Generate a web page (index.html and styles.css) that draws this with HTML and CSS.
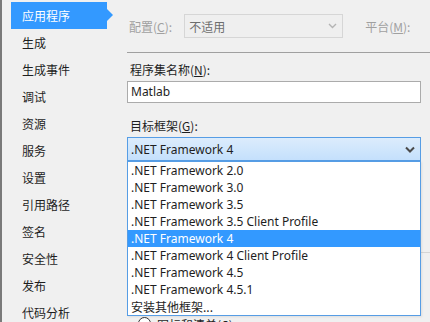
FILE: index.html
```html
<!DOCTYPE html>
<html>
<head lang="zh-CN">
    <meta charset="UTF-8">
    <title>Matlab - 属性</title>
    <link rel="stylesheet" href="styles.css">
</head>
<body>
<div class="page">
    <ul class="side-nav">
        <li class="active">应用程序</li>
        <li>生成</li>
        <li>生成事件</li>
        <li>调试</li>
        <li>资源</li>
        <li>服务</li>
        <li>设置</li>
        <li>引用路径</li>
        <li>签名</li>
        <li>安全性</li>
        <li>发布</li>
        <li>代码分析</li>
    </ul>
    <div class="main">
        <div class="cfg-bar">
            <span class="cfg-label">配置(<u>C</u>):</span>
            <div class="cfg-select">
                <span>不适用</span>
                <svg width="9" height="6" viewBox="0 0 9 6"><polyline points="1,1 4.5,4.5 8,1" fill="none" stroke="#b4b4b4" stroke-width="1.4"/></svg>
            </div>
            <span class="cfg-label">平台(<u>M</u>):</span>
        </div>
        <div class="form">
            <div class="field-label">程序集名称(<u>N</u>):</div>
            <div class="textbox">Matlab</div>
            <div class="field-label second">目标框架(<u>G</u>):</div>
            <div class="combo-wrap">
                <div class="combo">
                    <span>.NET Framework 4</span>
                    <svg width="10" height="7" viewBox="0 0 10 7"><polyline points="1,1.5 5,5.5 9,1.5" fill="none" stroke="#4a4a4a" stroke-width="2"/></svg>
                </div>
                <ul class="combo-list">
                    <li>.NET Framework 2.0</li>
                    <li>.NET Framework 3.0</li>
                    <li>.NET Framework 3.5</li>
                    <li>.NET Framework 3.5 Client Profile</li>
                    <li class="selected">.NET Framework 4</li>
                    <li>.NET Framework 4 Client Profile</li>
                    <li>.NET Framework 4.5</li>
                    <li>.NET Framework 4.5.1</li>
                    <li>安装其他框架...</li>
                </ul>
            </div>
            <div class="section-line"></div>
            <div class="radio-row">
                <span class="radio"></span>
                <span>图标和清单(<u>C</u>)</span>
            </div>
        </div>
    </div>
</div>
</body>
</html>
```

FILE: styles.css
```css
html, body {
    margin: 0px;
    padding: 0px;
    background: #f0f0f0;
    overflow: hidden;
}
body {
    font-family: "Noto Sans", "Noto Sans CJK SC", sans-serif;
    font-size: 12px;
    color: #1e1e1e;
}
ul, li {
    margin: 0px;
    padding: 0px;
    list-style: none;
}
.page {
    display: flex;
    width: 430px;
    height: 322px;
    border-left: 2px solid #7a7a7a;
    box-sizing: border-box;
}
.side-nav {
    width: 125px;
    flex: none;
    padding-top: 2px;
}
.side-nav li {
    position: relative;
    width: 96px;
    height: 27px;
    line-height: 27px;
    margin-left: 9px;
    padding-left: 11px;
    box-sizing: border-box;
    font-family: "Noto Sans CJK SC", sans-serif;
}
.side-nav li.active {
    background: #3399ff;
    color: #ffffff;
}
.side-nav li.active:after {
    content: "";
    position: absolute;
    right: -6px;
    top: 7px;
    border-left: 6px solid #3399ff;
    border-top: 6px solid transparent;
    border-bottom: 6px solid transparent;
}
.main {
    flex: 1;
    min-width: 0;
}
.cfg-bar {
    display: flex;
    align-items: center;
    height: 53px;
    padding: 0px 0px 0px 2px;
    border-bottom: 1px solid #a0a0a0;
    box-sizing: border-box;
    color: #a0a0a0;
    font-family: "Noto Sans CJK SC", sans-serif;
}
.cfg-label {
    white-space: nowrap;
}
.cfg-select {
    display: flex;
    align-items: center;
    justify-content: space-between;
    width: 159px;
    height: 24px;
    margin: 0px 22px 0px 12px;
    padding: 0px 5px 0px 4px;
    border: 1px solid #d6d6d6;
    box-sizing: border-box;
    background: #efefef;
    color: #6d6d6d;
}
.form {
    padding: 8px 9px 0px 0px;
}
.field-label {
    height: 17px;
    line-height: 17px;
    padding-left: 3px;
    font-family: "Noto Sans CJK SC", sans-serif;
}
.field-label.second {
    margin-top: 14px;
}
.textbox {
    height: 22px;
    line-height: 20px;
    margin-top: 3px;
    padding-left: 3px;
    border: 1px solid #ababab;
    box-sizing: border-box;
    background: #ffffff;
}
.combo-wrap {
    position: relative;
    margin-top: 3px;
}
.combo {
    display: flex;
    align-items: center;
    justify-content: space-between;
    height: 24px;
    padding: 0px 5px 0px 3px;
    border: 1px solid #569de5;
    box-sizing: border-box;
    background: linear-gradient(#dcecfc, #c4e0fc);
}
.combo-list {
    position: absolute;
    left: 0px;
    right: 0px;
    top: 24px;
    z-index: 10;
    border: 1px solid #569de5;
    background: #ffffff;
    box-shadow: 1px 1px 2px rgba(0, 0, 0, 0.08);
}
.combo-list li {
    height: 17px;
    line-height: 17px;
    padding-left: 3px;
    white-space: nowrap;
}
.combo-list li:last-child {
    font-family: "Noto Sans CJK SC", sans-serif;
}
.combo-list li.selected {
    background: #3399ff;
    color: #ffffff;
}
.section-line {
    margin: 91px -9px 0px 0px;
    border-top: 1px solid #d5d5d5;
}
.radio-row {
    display: flex;
    align-items: flex-start;
    gap: 6px;
    height: 17px;
    line-height: 17px;
    margin-top: 63px;
    padding-left: 11px;
    font-family: "Noto Sans CJK SC", sans-serif;
}
.radio {
    width: 11px;
    height: 11px;
    margin-top: 1px;
    border: 1px solid #333333;
    border-radius: 50%;
    background: #ffffff;
}
```
